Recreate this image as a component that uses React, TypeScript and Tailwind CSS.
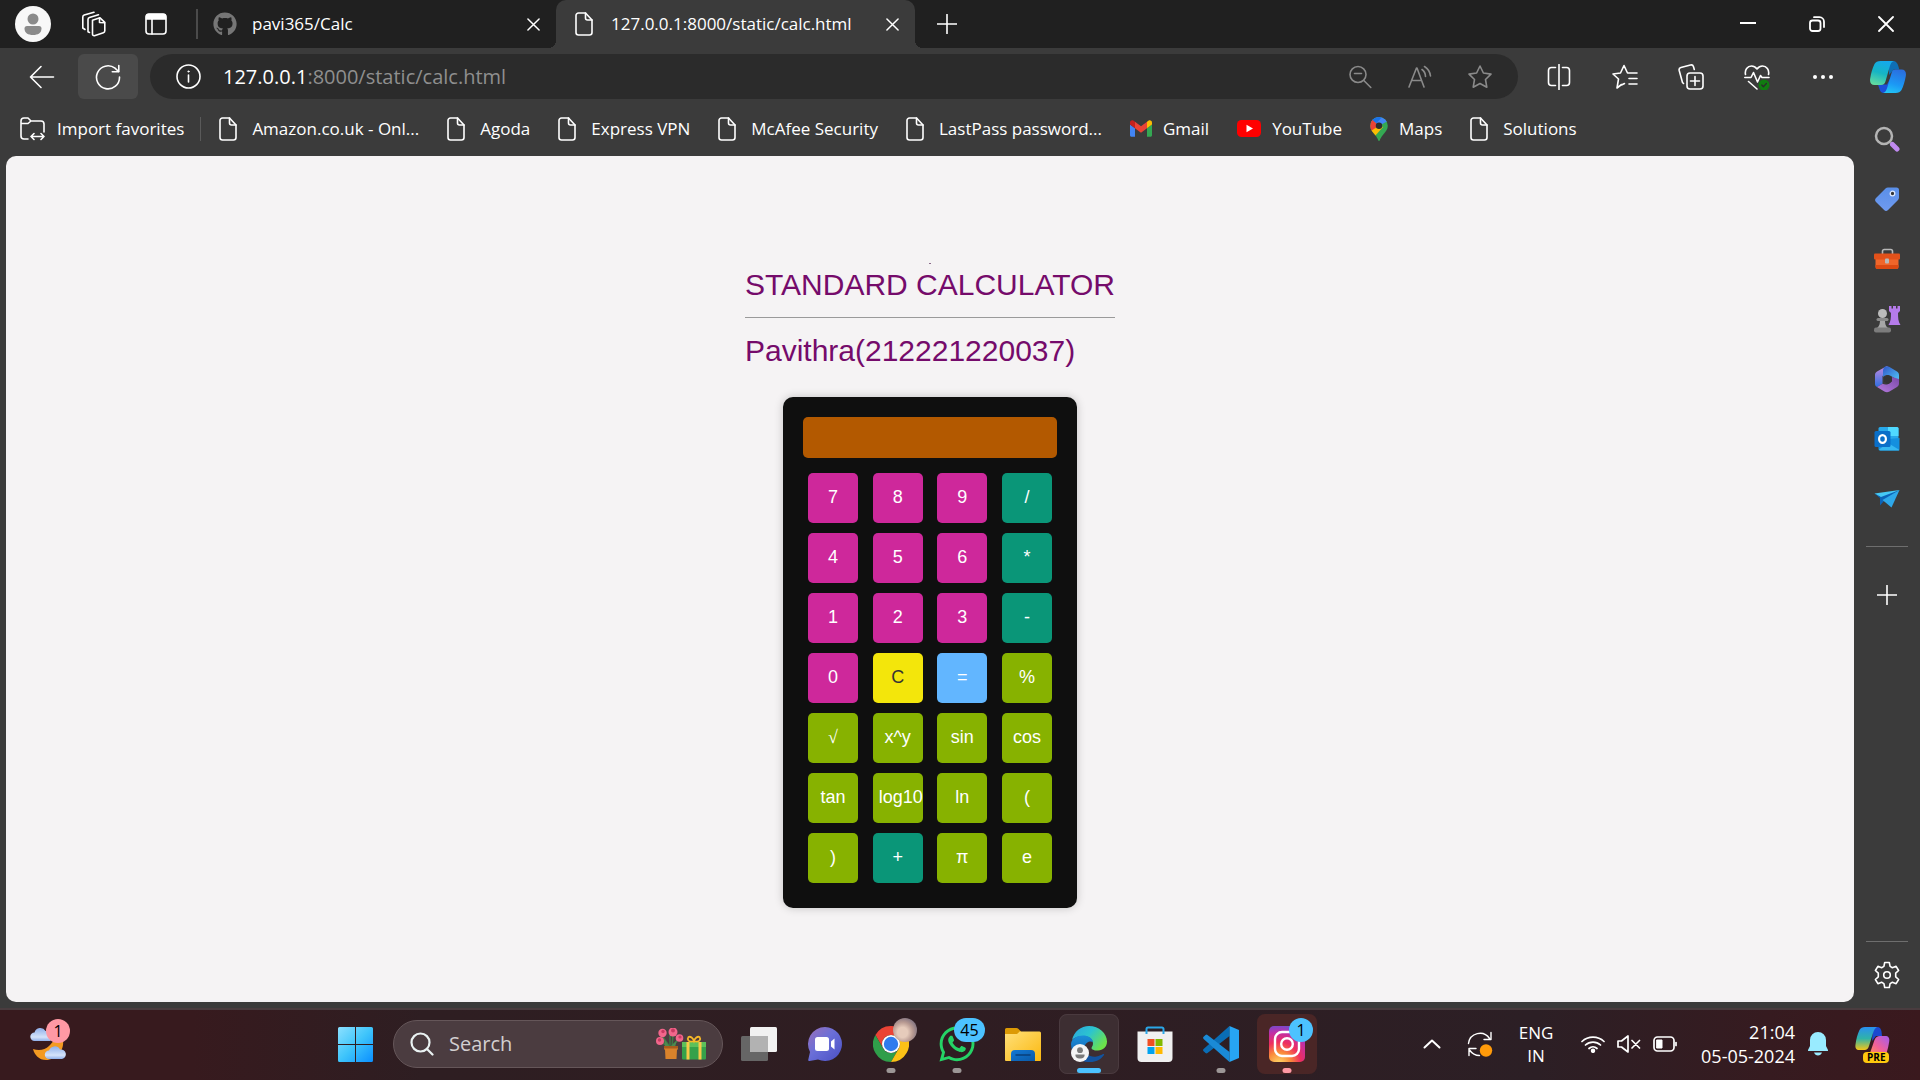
import React, { useState } from "react";
import { FaGithub, FaWhatsapp } from "react-icons/fa";

type IconProps = { className?: string };

const line = {
  fill: "none",
  stroke: "currentColor",
  strokeWidth: 1.6,
  strokeLinecap: "round" as const,
  strokeLinejoin: "round" as const,
};

function PageIcon({ className = "" }: IconProps) {
  return (
    <svg viewBox="0 0 18 24" className={`h-6 w-[18px] shrink-0 ${className}`} {...line}>
      <path d="M3.5 1h7L17 8v12.500a2.500 2.500 0 0 1-2.500 2.500h-11A2.500 2.500 0 0 1 1 20.500v-17A2.500 2.500 0 0 1 3.500 1z" />
      <path d="M10.500 1v5a2 2 0 0 0 2 2H17" />
    </svg>
  );
}

function WorkspacesIcon() {
  return (
    <svg viewBox="0 0 26 26" className="size-[26px]" {...line}>
      <path d="M12.500 9.200 20 6.800l4.800 4.500v8.500a2 2 0 0 1-1.400 1.900l-9 3a1.500 1.500 0 0 1-1.900-1.400z" />
      <path d="M19.500 7v4.500l5 .3" />
      <path d="M9.500 21.500 8 20.800V8.500A2 2 0 0 1 9.400 6.600L18.500 3.800" />
      <path d="M5 18.500 2.800 17V6a2 2 0 0 1 1.400-1.900L14 1.200" />
    </svg>
  );
}

function VerticalTabsIcon() {
  return (
    <svg viewBox="0 0 22 22" className="size-[22px]" {...line}>
      <rect x="1" y="1" width="20" height="20" rx="3" />
      <path d="M1.500 3.500A2 2 0 0 1 3.500 1.500h15a2 2 0 0 1 2 2V6h-19z" fill="currentColor" />
      <path d="M7 6v15" />
    </svg>
  );
}

function CloseIcon() {
  return (
    <svg viewBox="0 0 14 14" className="size-[13px]" {...line}>
      <path d="M1 1l12 12M13 1 1 13" />
    </svg>
  );
}

function PlusIcon() {
  return (
    <svg viewBox="0 0 20 20" className="size-5" {...line}>
      <path d="M10 0.500v19M0.500 10h19" />
    </svg>
  );
}

function CopilotIcon() {
  return (
    <svg viewBox="0 0 36 32" className="h-8 w-9">
      <defs>
        <linearGradient id="cpA" x1="0.600" y1="0" x2="0.300" y2="1">
          <stop offset="0" stopColor="#15a9ec" />
          <stop offset="0.500" stopColor="#16b5c4" />
          <stop offset="1" stopColor="#62dba0" />
        </linearGradient>
        <linearGradient id="cpB" x1="0.600" y1="0" x2="0.300" y2="1">
          <stop offset="0" stopColor="#2a6fe0" />
          <stop offset="0.600" stopColor="#1b98f5" />
          <stop offset="1" stopColor="#22c3f5" />
        </linearGradient>
      </defs>
      <path d="M19 0h4c3 0 4.500 2 5.300 5l1 3.500h-5.500L19 14z" fill="#0f6fb5" />
      <path d="M8 23.500h9l3-6 .5 10.500-2.500 4h-4c-3 0-4-2-4.700-4.500z" fill="#1c4fd8" />
      <path d="M10.500 0H24c-2.500.6-3.600 3-4.400 6l-4 14c-.7 2.600-2 4-4.600 4H4.500C1 24-.5 21.500.2 17.500 1 12 2.500 7 4.500 3 5.700 1 7.500 0 10.500 0z" fill="url(#cpA)" />
      <path d="M25.500 8.500h6c3.500 0 5 2.500 4.300 6.500-1 5.500-2.300 10-4.300 14-1.200 2-3 3-6 3H13c2.500-.6 3.600-3 4.400-6l4-13.500c.700-2.600 1.500-4 4.100-4z" fill="url(#cpB)" />
    </svg>
  );
}

function TitleBar() {
  return (
    <header className="flex h-12 items-center bg-[#202020]">
      <div className="flex items-center">
        <button aria-label="Profile" className="ml-[15px] grid size-9 place-items-center overflow-hidden rounded-full bg-[#f8f8f8]">
          <svg viewBox="0 0 36 36" className="size-9" fill="#8b8b8b">
            <circle cx="18" cy="13" r="5.500" />
            <path d="M9.500 22.500A2.500 2.500 0 0 1 12 20h12a2.500 2.500 0 0 1 2.500 2.500C26.500 27 23 29 18 29s-8.500-2-8.500-6.500z" />
          </svg>
        </button>
        <button aria-label="Workspaces" className="ml-[29px]"><WorkspacesIcon /></button>
        <button aria-label="Tab actions" className="ml-[39px]"><VerticalTabsIcon /></button>
      </div>
      <div className="ml-[29px] h-[30px] w-0.5 bg-[#4b4b4b]" />
      <nav className="flex h-12" aria-label="Tabs">
        <div className="flex w-[358px] items-center pl-[15px] pr-4">
          <FaGithub className="size-6 text-[#767676]" />
          <span className="ml-[15px] flex-1 text-[17px]">pavi365/Calc</span>
          <button aria-label="Close tab"><CloseIcon /></button>
        </div>
        <div className="relative flex w-[359px] items-center rounded-t-[10px] bg-[#3b3b3b] pl-[19px] pr-4">
          <span className="absolute -left-2 bottom-0 size-2 bg-[radial-gradient(circle_at_0_0,transparent_8px,#3b3b3b_8px)]" />
          <span className="absolute -right-2 bottom-0 size-2 bg-[radial-gradient(circle_at_100%_0,transparent_8px,#3b3b3b_8px)]" />
          <PageIcon />
          <span className="ml-[18px] flex-1 text-[17px]">127.0.0.1:8000/static/calc.html</span>
          <button aria-label="Close tab"><CloseIcon /></button>
        </div>
      </nav>
      <button aria-label="New tab" className="ml-[22px]"><PlusIcon /></button>
      <div className="ml-auto flex h-12">
        <button aria-label="Minimize" className="grid w-[69px] place-items-center">
          <svg viewBox="0 0 16 16" className="size-4"><path d="M0 6h16v2H0z" fill="#fff" /></svg>
        </button>
        <button aria-label="Restore" className="grid w-[69px] place-items-center">
          <svg viewBox="0 0 16 16" className="size-4" {...line} strokeWidth={1.8}>
            <rect x="1" y="4.500" width="10.500" height="10.500" rx="2.500" />
            <path d="M5 1.200h5.500a4.500 4.500 0 0 1 4.500 4.500V11" />
          </svg>
        </button>
        <button aria-label="Close window" className="grid w-[69px] place-items-center">
          <svg viewBox="0 0 16 16" className="size-4" {...line} strokeWidth={1.800}><path d="M1 1l14 14M15 1 1 15" /></svg>
        </button>
      </div>
    </header>
  );
}

function ToolButton({ label, children }: { label: string; children: React.ReactNode }) {
  return (
    <button aria-label={label} className="grid h-full w-[66px] shrink-0 place-items-center">
      {children}
    </button>
  );
}

function AddressRow() {
  return (
    <div className="flex h-[57px] items-center bg-[#3b3b3b]">
      <button aria-label="Back" className="ml-[29px]">
        <svg viewBox="0 0 26 24" className="h-6 w-[26px]" {...line}><path d="M24.500 12H1.500M12 1.500 1.500 12 12 22.500" /></svg>
      </button>
      <button aria-label="Refresh" className="ml-[23px] grid h-[45px] w-[60px] place-items-center rounded-md bg-[#4a4a4a]">
        <svg viewBox="0 0 26 26" className="size-[26px]" {...line}>
          <path d="M24.500 13A11.500 11.500 0 1 1 20 4.200L23.500 7.500" />
          <path d="M23.800 1.500v6.300h-6.500" />
        </svg>
      </button>
      <div className="ml-3 flex h-[45px] flex-1 items-center rounded-full bg-[#2b2b2b] pl-[26px] pr-2">
        <svg viewBox="0 0 25 25" className="size-[25px]" {...line}>
          <circle cx="12.500" cy="12.500" r="11.500" />
          <path d="M12.500 11v7" />
          <circle cx="12.500" cy="7.500" r=".8" fill="currentColor" strokeWidth=".5" />
        </svg>
        <span className="ml-[22px] flex-1 text-[20px]">
          127.0.0.1<span className="text-[#8f8f8f]">:8000/static/calc.html</span>
        </span>
        <div className="flex text-[#8a8a8a]">
          <button aria-label="Zoom out" className="grid w-[60px] place-items-center">
            <svg viewBox="0 0 24 24" className="size-6" {...line}><circle cx="10" cy="9.500" r="8" /><path d="M6.500 8.500h7M15.800 15.500l7 7" /></svg>
          </button>
          <button aria-label="Read aloud" className="grid w-[60px] place-items-center">
            <svg viewBox="0 0 24 24" className="size-6" {...line}><path d="M1 22 8.500 3h.5l7 19M4 15.500h9.500M14 4.500a9 9 0 0 1 3.500 7M16.500 1.500A13 13 0 0 1 22.500 11" /></svg>
          </button>
          <button aria-label="Add to favorites" className="grid w-[60px] place-items-center">
            <svg viewBox="0 0 26 26" className="size-[26px]" {...line}><path d="M13 2l3.400 7 7.600 1.100-5.500 5.400 1.300 7.700L13 19.500l-6.800 3.700 1.300-7.700L2 10.100 9.600 9z" /></svg>
          </button>
        </div>
      </div>
      <div className="ml-2 flex h-full">
        <ToolButton label="Split screen">
          <svg viewBox="0 0 26 26" className="size-[26px]" {...line}><path d="M9.500 3.500h-4a3 3 0 0 0-3 3v12a3 3 0 0 0 3 3h4M16.500 3.500h4a3 3 0 0 1 3 3v12a3 3 0 0 1-3 3h-4M13 .5v25" /></svg>
        </ToolButton>
        <ToolButton label="Favorites">
          <svg viewBox="0 0 26 26" className="size-[26px]" {...line}><path d="M9.500 20.500 5 24l1.500-9L1 10l7.500-1L12 1.500 15.500 9H25M17 14.500h8M17 20h8M12.500 19.500 9.500 21" /></svg>
        </ToolButton>
        <ToolButton label="Collections">
          <svg viewBox="0 0 26 26" className="size-[26px]" {...line}>
            <rect x="9" y="9" width="16" height="16" rx="3" />
            <path d="M17 12.500v9M12.500 17h9M5.500 19.500 4.500 18.500 1.200 6.500a2.500 2.500 0 0 1 1.700-3L12.500 1a2.500 2.500 0 0 1 3 1.700L16.300 5.500" />
          </svg>
        </ToolButton>
        <ToolButton label="Browser essentials">
          <svg viewBox="0 0 26 26" className="size-[26px]" {...line}>
            <path d="M1.500 10.500C.5 6 3.500 2 7.500 2c2.500 0 4.200 1.300 5.500 3 1.300-1.700 3-3 5.500-3 4 0 7 4 6 8.500" />
            <path d="M.8 13.500H7l2.500-5 4 9.500 3-6.500 1.500 2h7M4.500 17.500 13 25" />
            <circle cx="20" cy="21" r="5.500" fill="#107c10" stroke="none" />
            <path d="M17.800 21l1.600 1.700 3-3.200" stroke="#2b2b2b" strokeWidth="1.300" />
          </svg>
        </ToolButton>
        <ToolButton label="Settings and more">
          <svg viewBox="0 0 22 6" className="h-1.5 w-[22px]" fill="#fff"><circle cx="3" cy="3" r="2" /><circle cx="11" cy="3" r="2" /><circle cx="19" cy="3" r="2" /></svg>
        </ToolButton>
        <button aria-label="Copilot" className="grid w-16 place-items-center"><CopilotIcon /></button>
      </div>
    </div>
  );
}

function GmailIcon() {
  return (
    <svg viewBox="0 62 512 388" className="h-[17px] w-[22px]">
      <path fill="#4285f4" d="M34.910 448.818h81.454V251L0 163.727V413.910c0 19.287 15.622 34.910 34.910 34.910z" />
      <path fill="#34a853" d="M395.636 448.818h81.455c19.287 0 34.909-15.622 34.909-34.909V163.727L395.636 251z" />
      <path fill="#fbbc04" d="M395.636 99.727V251L512 163.727v-46.545c0-43.142-49.250-67.782-83.782-41.891z" />
      <path fill="#ea4335" d="M116.364 251V99.727L256 204.455 395.636 99.727V251L256 355.727z" />
      <path fill="#c5221f" d="M0 117.182v46.545L116.364 251V99.727L83.782 75.291C49.250 49.400 0 74.040 0 117.182z" />
    </svg>
  );
}

function YouTubeIcon() {
  return (
    <svg viewBox="0 0 24 17" className="h-[17px] w-6"><rect width="24" height="17" rx="4.500" fill="#f00" /><path d="M9.500 4.800v7.400L16 8.500z" fill="#fff" /></svg>
  );
}

function MapsIcon() {
  return (
    <svg viewBox="0 0 18 24" className="h-6 w-[18px]">
      <defs><clipPath id="pin"><path d="M9 0a8.800 8.800 0 0 1 8.800 8.800c0 3.500-2 5.600-4.300 8.400C11 20.200 10.200 22 9.700 23.500c-.3.700-1.100.7-1.400 0-.5-1.500-1.300-3.300-3.800-6.300C2.200 14.400.2 12.300.2 8.800A8.800 8.800 0 0 1 9 0z" /></clipPath></defs>
      <g clipPath="url(#pin)">
        <path d="M0 0h18v24H0z" fill="#34a853" />
        <path d="M-2 6 9 8.800 18 4V-2H0z" fill="#4285f4" />
        <path d="M3-2 13-1 6.500 6 2 4z" fill="#1a73e8" />
        <path d="M-1 2 2.500 3 9 8.800 1 16-1 12z" fill="#ea4335" />
        <path d="M9 8.800 0 14.500 5 19 13 10z" fill="#fbbc04" />
      </g>
      <circle cx="9" cy="8.800" r="3.200" fill="#2d2d2d" />
    </svg>
  );
}

const favorites: { name: string; icon?: React.ReactNode }[] = [
  { name: "Amazon.co.uk - Onl..." },
  { name: "Agoda" },
  { name: "Express VPN" },
  { name: "McAfee Security" },
  { name: "LastPass password..." },
  { name: "Gmail", icon: <GmailIcon /> },
  { name: "YouTube", icon: <YouTubeIcon /> },
  { name: "Maps", icon: <MapsIcon /> },
  { name: "Solutions" },
];

function FavoritesBar() {
  return (
    <nav aria-label="Favorites" className="flex h-[51px] items-center pb-1 pl-3.5 text-[17px]">
      <a href="#import" className="flex items-center gap-3">
        <svg viewBox="0 0 25 24" className="h-6 w-[25px]" {...line}>
          <path d="M8 22H4a3 3 0 0 1-3-3V4a3 3 0 0 1 3-3h4l3 3h10a3 3 0 0 1 3 3v8M1 6.500h7L11 4M11 19.500h13M14 16.500l-3 3 3 3M21 16.500l3 3-3 3" />
        </svg>
        Import favorites
      </a>
      <div className="ml-4 mr-[18px] h-6 w-px bg-[#5a5a5a]" />
      <div className="flex items-center gap-7">
        {favorites.map((f) => (
          <a key={f.name} href="#favorite" className={`flex items-center whitespace-nowrap ${f.icon ? "gap-[11px]" : "gap-[15px]"}`}>
            {f.icon ?? <PageIcon />}
            {f.name}
          </a>
        ))}
      </div>
    </nav>
  );
}

const keyTone = {
  digit: "bg-[#ce289b] text-white",
  op: "bg-[#0a9678] text-white",
  fn: "bg-[#87b200] text-white",
  clear: "bg-[#f3e60b] text-[#333]",
  equal: "bg-[#62b6ff] text-white",
};

type Tone = keyof typeof keyTone;

const keys: [string, Tone][] = [
  ["7", "digit"], ["8", "digit"], ["9", "digit"], ["/", "op"],
  ["4", "digit"], ["5", "digit"], ["6", "digit"], ["*", "op"],
  ["1", "digit"], ["2", "digit"], ["3", "digit"], ["-", "op"],
  ["0", "digit"], ["C", "clear"], ["=", "equal"], ["%", "fn"],
  ["√", "fn"], ["x^y", "fn"], ["sin", "fn"], ["cos", "fn"],
  ["tan", "fn"], ["log10", "fn"], ["ln", "fn"], ["(", "fn"],
  [")", "fn"], ["+", "op"], ["π", "fn"], ["e", "fn"],
];

function Calculator() {
  const [value, setValue] = useState("");
  return (
    <section className="mt-7 w-[294px] rounded-[10px] bg-[#0f0f0f] px-5 pb-[25px] pt-5 shadow-[0_0_10px_rgba(0,0,0,0.2)]">
      <input
        aria-label="Result"
        value={value}
        readOnly
        className="block h-[41px] w-full rounded-[5px] bg-[#b35900] px-2.5 text-right text-lg text-white outline-none"
      />
      <div className="mt-[15px] grid grid-cols-[repeat(4,50px)] justify-between gap-y-2.5 px-[5px]">
        {keys.map(([label, tone]) => (
          <button
            key={label}
            onClick={() => setValue(label === "C" ? "" : value + label)}
            className={`h-[50px] rounded-[5px] px-1.5 pb-0.5 text-left text-lg ${keyTone[tone]}`}
          >
            <span className={label === "√" ? "block text-center font-['Liberation_Serif',serif]" : "block text-center"}>{label}</span>
          </button>
        ))}
      </div>
    </section>
  );
}

function PageContent() {
  return (
    <main className="flex flex-1 flex-col items-center rounded-[10px] bg-[#f5f3f4] pt-[107px] font-['Liberation_Sans',Arial,sans-serif]">
      <hr className="w-0.5 border-t border-[#8a6a8a]" />
      <div className="text-[30px] text-[#750b6b]">
        <h1 className="pt-[3px] leading-9">STANDARD CALCULATOR</h1>
        <hr className="mb-[15px] mt-3.5 border-t border-[#9a9a9a]" />
        <p className="leading-9">Pavithra(212221220037)</p>
      </div>
      <Calculator />
    </main>
  );
}

function SideSearch() {
  return (
    <svg viewBox="0 0 26 26" className="size-[26px]">
      <path d="M15.500 15.500l4 4" stroke="#8a8a8a" strokeWidth="2.500" />
      <circle cx="10" cy="10" r="8" fill="none" stroke="#b4b4b4" strokeWidth="2.500" />
      <path d="M18.500 18.500l4.500 4.500" stroke="#c08af0" strokeWidth="5" strokeLinecap="round" />
    </svg>
  );
}

function SideTag() {
  return (
    <svg viewBox="0 0 26 26" className="size-[26px]">
      <defs><linearGradient id="tag" x1="0" y1="0" x2="0" y2="1"><stop offset="0" stopColor="#5a8fe8" /><stop offset="1" stopColor="#6f9bf0" /></linearGradient></defs>
      <path d="M14 1.500h8.500A2.500 2.500 0 0 1 25 4v7.500c0 1-.3 1.700-1 2.400L14 24c-1.200 1.200-2.700 1.200-3.900 0L2 16c-1.200-1.200-1.200-2.700 0-3.900l9.500-9.600c.7-.7 1.500-1 2.500-1z" fill="url(#tag)" />
      <circle cx="18.500" cy="7.500" r="2.300" fill="#333" stroke="#dce8fc" strokeWidth="1.300" />
    </svg>
  );
}

function SideToolbox() {
  return (
    <svg viewBox="0 0 26 22" className="h-[22px] w-[26px]">
      <path d="M8.500 6V3.200A1.700 1.700 0 0 1 10.200 1.500h6.600a1.700 1.700 0 0 1 1.700 1.700V6" fill="none" stroke="#b8b8b8" strokeWidth="1.600" />
      <path d="M1.500 10h23v9a2 2 0 0 1-2 2h-19a2 2 0 0 1-2-2z" fill="#f0662a" />
      <path d="M1.500 17h23v2a2 2 0 0 1-2 2h-19a2 2 0 0 1-2-2z" fill="#dc4a12" />
      <rect y="5.500" width="26" height="6" rx="1" fill="#e2511a" />
      <rect x="11" y="10.500" width="4" height="5" rx="1" fill="#b9b9b9" />
    </svg>
  );
}

function SideGames() {
  return (
    <svg viewBox="0 0 28 28" className="size-7">
      <path d="M16 1h2.500v2.500H20V1h3v2.500h1.500V1H27v5l-2 2c0 5 .3 9 2.500 12H15.500C17.700 17 18 13 18 8l-2-2z" fill="#b57bea" />
      <circle cx="9.500" cy="8.500" r="4.500" fill="#bcbcbc" />
      <path d="M7 14h5c0 5 .6 7 3 9H4c2.400-2 3-4 3-9z" fill="#a6a6a6" />
      <rect x="3.500" y="13" width="12" height="3" rx="1.500" fill="#8a8a8a" />
      <rect x="1" y="22.500" width="17" height="5" rx="2" fill="#7c7c7c" />
    </svg>
  );
}

function SideM365() {
  return (
    <svg viewBox="0 0 26 28" className="h-7 w-[26px]">
      <defs>
        <linearGradient id="mA" x1="0" y1="0" x2="1" y2="1"><stop offset="0" stopColor="#2f57c9" /><stop offset="1" stopColor="#52c6f7" /></linearGradient>
        <linearGradient id="mB" x1="0" y1="0" x2="0" y2="1"><stop offset="0" stopColor="#c58ae0" /><stop offset="1" stopColor="#2f6fe0" /></linearGradient>
        <linearGradient id="mC" x1="0" y1="1" x2="1" y2="0"><stop offset="0" stopColor="#b77be0" /><stop offset="1" stopColor="#7a4aa8" /></linearGradient>
      </defs>
      <path d="M13 1 3 6.500C1.700 7.300 1 8.500 1 10v9c0 1.500 1 2.500 2 3l5.500-3.200V11L17 6z" fill="url(#mB)" />
      <path d="M10 2.200c2-1.200 3.800-1.200 5.500-.2L23 6.500c1.300.8 2 2 2 3.500v6l-8-5c-2.500-1.500-5.500-1.500-8 1V5z" fill="url(#mA)" />
      <path d="M25 14v4.500c0 1.500-.7 2.700-2 3.500l-7.500 4.500c-1.700 1-3.400 1-5.100 0L3 22l5.500-3.200c3 1.500 6 .7 8-1L18 12z" fill="url(#mC)" />
      <path d="M10 12.500 14 10l4 2.500v4l-4 2.500-4-2.500z" fill="#343434" />
    </svg>
  );
}

function SideOutlook() {
  return (
    <svg viewBox="0 0 26 26" className="size-[26px]">
      <path d="M6 1h17a1.500 1.500 0 0 1 1.500 1.500V15H4.500V2.500A1.500 1.500 0 0 1 6 1z" fill="#28a8ea" />
      <path d="M14 1h9a1.500 1.500 0 0 1 1.500 1.500V10H14z" fill="#50d9ff" />
      <path d="M4.500 14 25.500 12v11a1.500 1.500 0 0 1-1.500 1.500H6A1.500 1.500 0 0 1 4.500 23z" fill="#1490df" />
      <path d="M25.500 24 14 17l-9 6.500c.3.700.8 1 1.500 1H24c.600 0 1.200-.100 1.500-.5z" fill="#35b8f1" />
      <rect x=".5" y="5" width="16" height="16" rx="1.500" fill="#0a6fc9" />
      <ellipse cx="8.500" cy="13" rx="3.400" ry="3.900" fill="none" stroke="#fff" strokeWidth="2.200" />
    </svg>
  );
}

function SidePlane() {
  return (
    <svg viewBox="0 0 26 20" className="h-5 w-[26px]">
      <path d="M.5 4.500 25.500 1 10 10.500z" fill="#45c8f5" />
      <path d="M.5 4.500 6 9v7.500L10 12l15.500-11L7 8z" fill="#0b63b8" />
      <path d="M25.500 1 17.500 18.500 8.500 11z" fill="#2ea8ea" />
    </svg>
  );
}

function Sidebar() {
  const items: [string, React.ReactNode][] = [
    ["Search", <SideSearch />],
    ["Shopping", <SideTag />],
    ["Tools", <SideToolbox />],
    ["Games", <SideGames />],
    ["Microsoft 365", <SideM365 />],
    ["Outlook", <SideOutlook />],
    ["Drop", <SidePlane />],
  ];
  return (
    <aside className="flex w-[66px] shrink-0 flex-col items-center pt-1">
      {items.map(([name, icon]) => (
        <button key={name} aria-label={name} className="grid h-[60px] w-full place-items-center">{icon}</button>
      ))}
      <div className="mt-[17px] h-px w-[42px] bg-[#6e6e6e]" />
      <button aria-label="Customize" className="mt-[38px]"><PlusIcon /></button>
      <div className="mt-auto h-px w-[42px] bg-[#6e6e6e]" />
      <button aria-label="Settings" className="mb-[13px] mt-[19px]">
        <svg viewBox="0 0 28 28" className="size-7" {...line}>
          <path d="M11.700 1.500h4.600l.8 3.900 2.300 1.300 3.700-1.400 2.500 4.200-2.900 2.700v3.600l2.900 2.700-2.500 4.200-3.700-1.400-2.300 1.300-.8 3.900h-4.600l-.8-3.900-2.300-1.300-3.700 1.400-2.500-4.200 2.900-2.700v-3.600L2.400 9.500l2.500-4.200 3.700 1.400 2.300-1.300z" />
          <circle cx="14" cy="14" r="3.300" />
        </svg>
      </button>
    </aside>
  );
}

function WeatherIcon() {
  return (
    <svg viewBox="0 0 36 34" className="h-[34px] w-9">
      <defs>
        <linearGradient id="cloud" x1="0" y1="0" x2="0" y2="1"><stop offset="0" stopColor="#8fb0ea" /><stop offset=".7" stopColor="#d5e3fa" /><stop offset="1" stopColor="#8fb0ea" /></linearGradient>
      </defs>
      <path d="M33 13c1.500 11-7 20-17 20C9 33 4.500 28 3 22c6 2 12 1 16-3 2.500-2.500 4-4.500 6-7z" fill="#f39a22" />
      <path d="M4.500 14a4.200 4.200 0 0 1 0-8.400A6 6 0 0 1 15.500 4 5 5 0 0 1 20 14z" fill="url(#cloud)" />
      <path d="M19 32a4.200 4.200 0 0 1 0-8.400A6 6 0 0 1 30 22.500 4.800 4.800 0 0 1 32 32z" fill="url(#cloud)" />
    </svg>
  );
}

function StartIcon() {
  return (
    <svg viewBox="0 0 35 35" className="size-[35px]">
      <defs><linearGradient id="win" x1="0" y1="0" x2="35" y2="35" gradientUnits="userSpaceOnUse"><stop offset="0" stopColor="#8ce0ff" /><stop offset=".5" stopColor="#3fc5fb" /><stop offset="1" stopColor="#0a8fff" /></linearGradient></defs>
      <path d="M1.500 0H17v17H0V1.500A1.500 1.500 0 0 1 1.500 0zM18 0h15.500A1.500 1.500 0 0 1 35 1.500V17H18zM0 18h17v17H1.500A1.500 1.500 0 0 1 0 33.500zM18 18h17v15.500a1.500 1.500 0 0 1-1.500 1.500H18z" fill="url(#win)" />
    </svg>
  );
}

function GiftIcon() {
  return (
    <svg viewBox="0 0 50 32" className="h-8 w-[50px]">
      <g stroke="#3f7a45" strokeWidth="1.500" fill="none"><path d="M14 19 6 8M14 19V6M15 19 24 10M13 19 5 14M16 19 17 7" /></g>
      <path d="M8 11l6 8 7-7-2 7H9z" fill="#4c8a50" />
      <g fill="#f2668b"><circle cx="6.500" cy="5" r="4.200" /><circle cx="17" cy="4" r="4.500" /><circle cx="4" cy="13" r="4" /><circle cx="23.500" cy="10" r="3.800" /></g>
      <g fill="#c83a62"><circle cx="7" cy="3.500" r="1.700" /><circle cx="17" cy="2.500" r="2" /><circle cx="3.500" cy="12" r="1.700" /><circle cx="24" cy="9" r="1.600" /></g>
      <path d="M8 18h14v3.500h-1L20.500 31h-11L9 21.500H8z" fill="#d9822b" />
      <path d="M8 18h14v2.500H8z" fill="#a95c1c" />
      <rect x="26" y="14" width="24" height="17.500" rx="1" fill="#35a14a" />
      <rect x="26" y="14" width="24" height="5" fill="#5cc05a" />
      <path d="M30.500 14h3v17.500h-3zM42.500 14h3v17.500h-3z" fill="#f7c948" />
      <path d="M38 13c-6 2-7-2-5.500-4 2-1 4.500 1 5.500 4 1-3 3.500-5 5.500-4C45 11 44 15 38 13z" fill="none" stroke="#f7b928" strokeWidth="1.800" />
    </svg>
  );
}

function TaskViewIcon() {
  return (
    <svg viewBox="0 0 36 34" className="h-[34px] w-9">
      <rect y="9" width="27" height="25" rx="1.500" fill="#666" />
      <rect x="9" y="0" width="27" height="25" rx="1.500" fill="#f2f2f2" />
      <path d="M9 9h18v16H10.500A1.500 1.500 0 0 1 9 23.500z" fill="#b2b2b2" />
    </svg>
  );
}

function ChatIcon() {
  return (
    <svg viewBox="0 0 34 34" className="size-[34px]">
      <defs><linearGradient id="chat" x1="0" y1="0" x2="1" y2="1"><stop offset="0" stopColor="#9a6fb8" /><stop offset=".45" stopColor="#6a6fd8" /><stop offset="1" stopColor="#4a4fc4" /></linearGradient></defs>
      <path d="M17 0a17 17 0 1 1-7 32.500L1.500 34C.5 34 0 33.500.3 32.500L2 25A17 17 0 0 1 17 0z" fill="url(#chat)" />
      <rect x="7" y="10" width="14" height="14" rx="2.500" fill="#fff" />
      <path d="M23 14.500 26.500 11.500v11L23 19.500z" fill="#fff" />
    </svg>
  );
}

function ChromeIcon() {
  return (
    <svg viewBox="0 0 36 36" className="size-9">
      <path d="M2.410 9A18 18 0 0 1 33.590 9H18a9 9 0 0 0-7.800 13.500z" fill="#ea4335" />
      <path d="M2.410 9 10.200 22.500A9 9 0 0 0 25.800 22.500L18 36A18 18 0 0 1 2.410 9z" fill="#2f9e4a" />
      <path d="M33.590 9A18 18 0 0 1 18 36l7.800-13.500A9 9 0 0 0 18 9z" fill="#fbc116" />
      <circle cx="18" cy="18" r="9" fill="#fff" />
      <circle cx="18" cy="18" r="7.200" fill="#2f7bee" />
    </svg>
  );
}

function FolderIcon() {
  return (
    <svg viewBox="0 0 36 34" className="h-[34px] w-9">
      <defs>
        <linearGradient id="fold" x1="0" y1="0" x2="1" y2="1"><stop offset="0" stopColor="#ffe07a" /><stop offset="1" stopColor="#fbb80f" /></linearGradient>
        <linearGradient id="foldb" x1="0" y1="0" x2="1" y2="1"><stop offset="0" stopColor="#1378d4" /><stop offset="1" stopColor="#0a5aa8" /></linearGradient>
      </defs>
      <path d="M0 2.500A1.500 1.500 0 0 1 1.500 1h10c.8 0 1.300.300 1.800.8L16 4.500V10H0z" fill="#dc9a05" />
      <path d="M0 7h11c1 0 1.500-.3 2-.8L14.500 4.500h20A1.500 1.500 0 0 1 36 6v27a1 1 0 0 1-1 1H1a1 1 0 0 1-1-1z" fill="url(#fold)" />
      <path d="M6 34V27a4 4 0 0 1 4-4h16a4 4 0 0 1 4 4v7z" fill="url(#foldb)" />
      <path d="M11 28h14" stroke="#0a3f7a" strokeWidth="1.500" strokeLinecap="round" />
    </svg>
  );
}

function EdgeIcon() {
  return (
    <svg viewBox="0 0 36 36" className="size-9">
      <defs>
        <linearGradient id="edA" x1="0" y1="0" x2="1" y2=".6"><stop offset="0" stopColor="#2aa4e0" /><stop offset=".5" stopColor="#2cc4cf" /><stop offset="1" stopColor="#6ce34a" /></linearGradient>
        <linearGradient id="edB" x1="0" y1="0" x2="0" y2="1"><stop offset="0" stopColor="#1a8fd8" /><stop offset="1" stopColor="#1454a8" /></linearGradient>
      </defs>
      <path d="M1 14C3 5.500 10 0 18 0c10 0 18 7.500 18 15.500 0 5.500-4 9-9 9-4 0-6.500-1.200-6.500-2.600 0-1 1.500-1.700 1.500-4.400C22 13 17.500 10 12 10 7 10 3 12 1 14z" fill="url(#edA)" />
      <path d="M0 18C.5 12.500 6 9.500 12 9.500c5 0 9.500 2.500 10 6.500-2-1.500-8-.5-8.500 5.500-.5 6 4.500 10.500 9.500 13-2 1-3.500 1.500-5 1.500C8 36 0 28 0 18z" fill="url(#edB)" />
      <path d="M13.500 21.500c0 7 6 10 12 9 3-.5 5-1.700 6.500-2.500.8-.4 1.400.3 1 1-3 4.500-8 7-14 7-6-1.500-9-8-5.500-14.500z" fill="#12539e" />
      <circle cx="9" cy="27" r="9" fill="#f4f4f4" />
      <circle cx="9" cy="24.200" r="2.900" fill="#7a7a7a" />
      <path d="M4.500 28.500h9c.500 2.500-1.500 4-4.500 4s-5-1.500-4.500-4z" fill="#7a7a7a" />
    </svg>
  );
}

function StoreIcon() {
  return (
    <svg viewBox="0 0 36 36" className="size-9">
      <path d="M.5 5.500h35V32a4 4 0 0 1-4 4h-27a4 4 0 0 1-4-4z" fill="#f0f0f0" />
      <path d="M9.500 8V3A1.500 1.500 0 0 1 11 1.500h14A1.500 1.500 0 0 1 26.500 3v5" fill="none" stroke="#2aa7e8" strokeWidth="2" />
      <path d="M10.500 13h7v7h-7z" fill="#f04f23" /><path d="M18.500 13h7v7h-7z" fill="#80b900" />
      <path d="M10.500 21h7v7h-7z" fill="#00a3f0" /><path d="M18.500 21h7v7h-7z" fill="#ffb800" />
    </svg>
  );
}

function CodeIcon() {
  return (
    <svg viewBox="0 0 36 36" className="size-9">
      <path d="M26.500 0v10L4.500 27a1.500 1.500 0 0 1-2 0L.6 25.300c-.700-.6-.7-1.700 0-2.300z" fill="#0a6db5" />
      <path d="M26.500 36V26L4.500 9a1.500 1.500 0 0 0-2 0L.6 10.700c-.7.600-.7 1.700 0 2.300z" fill="#1a8ad6" />
      <path d="M26.500 0 36 4v28l-9.500 4z" fill="#27a5f2" />
    </svg>
  );
}

function InstagramIcon() {
  return (
    <svg viewBox="0 0 36 36" className="size-9">
      <defs>
        <radialGradient id="ig" cx=".28" cy="1.050" r="1.100"><stop offset="0" stopColor="#ffdc6a" /><stop offset=".3" stopColor="#fa8a3a" /><stop offset=".55" stopColor="#ee2e5f" /><stop offset=".8" stopColor="#c02fa8" /><stop offset="1" stopColor="#6a4fd0" /></radialGradient>
      </defs>
      <rect width="36" height="36" rx="5" fill="url(#ig)" />
      <rect x="6" y="6" width="24" height="24" rx="7" fill="none" stroke="#fff" strokeWidth="2.400" />
      <circle cx="18" cy="18" r="5.800" fill="none" stroke="#fff" strokeWidth="2.400" />
    </svg>
  );
}

type AppState = { name: string; icon: React.ReactNode; tile?: string; dot?: string; badge?: React.ReactNode };

const apps: AppState[] = [
  { name: "Task view", icon: <TaskViewIcon /> },
  { name: "Chat", icon: <ChatIcon /> },
  {
    name: "Chrome",
    icon: <ChromeIcon />,
    dot: "w-[9px] bg-[#9c9696]",
    badge: <span className="absolute right-1 top-[4px] size-6 rounded-full bg-[radial-gradient(circle_at_40%_60%,#e6cbbb_25%,#b89a92_50%,#857682_75%)]" />,
  },
  {
    name: "WhatsApp",
    icon: <FaWhatsapp className="size-10 text-[#25d366]" />,
    dot: "w-[9px] bg-[#9c9696]",
    badge: <span className="absolute right-0.5 top-[4px] grid h-6 w-[31px] place-items-center rounded-full bg-[#4cc2ff] text-[16px] leading-none text-black">45</span>,
  },
  { name: "File Explorer", icon: <FolderIcon /> },
  { name: "Edge", icon: <EdgeIcon />, tile: "bg-[#3d2e32] outline outline-1 -outline-offset-1 outline-[#4a3a3f]", dot: "w-6 bg-[#4cc2ff]" },
  { name: "Microsoft Store", icon: <StoreIcon /> },
  { name: "Visual Studio Code", icon: <CodeIcon />, dot: "w-[9px] bg-[#9c9696]" },
  {
    name: "Instagram",
    icon: <InstagramIcon />,
    tile: "bg-[#4a2626]",
    dot: "w-[9px] bg-[#ff99a4]",
    badge: <span className="absolute right-1 top-[4px] grid size-6 place-items-center rounded-full bg-[#4cc2ff] text-[16px] leading-none text-black">1</span>,
  },
];

function Taskbar() {
  return (
    <footer className="flex h-[72px] items-center border-t-2 border-[#4a3c3f] bg-[linear-gradient(90deg,#371a1e_0%,#371a1e_10%,#2e1e22_22%,#2f1d22_50%,#2c1f25_80%,#361b20_92%,#3a191e_100%)] pb-0.5">
      <button aria-label="Weather" className="relative ml-[30px] w-[42px]">
        <WeatherIcon />
        <span className="absolute right-0.5 -top-2 grid size-6 place-items-center rounded-full bg-[#ff99a4] text-[16px] leading-none text-black">1</span>
      </button>
      <div className="ml-[266px] flex items-center">
        <button aria-label="Start"><StartIcon /></button>
        <label className="ml-5 flex h-12 w-[330px] items-center rounded-full border border-[#655659] bg-[#4b3c40] pl-4 pr-4">
          <svg viewBox="0 0 24 24" className="size-6 shrink-0" fill="none" stroke="#eaf2f2" strokeWidth="2.200" strokeLinecap="round"><circle cx="10.500" cy="10.500" r="9" /><path d="M17 17l5.500 5.500" /></svg>
          <input type="search" aria-label="Search" placeholder="Search" className="ml-[15px] w-full min-w-0 flex-1 bg-transparent text-[20px] outline-none placeholder:text-[#d3cfd0]" />
          <GiftIcon />
        </label>
        <div className="ml-[6px] flex gap-1.5">
          {apps.map((app) => (
            <button key={app.name} aria-label={app.name} className={`relative grid size-[60px] place-items-center rounded-lg ${app.tile ?? ""}`}>
              {app.icon}
              {app.badge}
              {app.dot && <span className={`absolute bottom-px left-1/2 h-[5px] -translate-x-1/2 rounded-full ${app.dot}`} />}
            </button>
          ))}
        </div>
      </div>
      <div className="ml-auto flex items-center">
        <button aria-label="Show hidden icons">
          <svg viewBox="0 0 18 12" className="h-3 w-[18px]" {...line} strokeWidth={2}><path d="M1.500 9.500 9 2.500l7.500 7" /></svg>
        </button>
        <button aria-label="Updates" className="ml-[26px]">
          <svg viewBox="0 0 26 26" className="size-[26px]" {...line} strokeWidth={1.400}>
            <path d="M1.500 12.500A11.500 11.500 0 0 1 22.500 7.500M24 1.500v7h-7M2 24.500v-7h7M2.500 19c2.500 3.500 6 5.500 10 5.500" />
            <circle cx="19" cy="19.500" r="6.200" fill="#ff9a0a" stroke="none" />
          </svg>
        </button>
        <button className="ml-[25px] w-9 text-center text-[17px] leading-[23px]">ENG IN</button>
        <button aria-label="Network, sound and battery" className="ml-[27px] flex items-center gap-3">
          <svg viewBox="0 0 24 18" className="h-[18px] w-6" {...line} strokeWidth={1.700}>
            <path d="M1 6.500a16 16 0 0 1 22 0M4.500 10a11 11 0 0 1 15 0M8 13.500a6 6 0 0 1 8 0" />
            <circle cx="12" cy="15.800" r="1.400" fill="currentColor" />
          </svg>
          <svg viewBox="0 0 24 18" className="h-[18px] w-6" {...line} strokeWidth={1.700}>
            <path d="M1 6h3.500L11 1v16l-6.500-5H1zM15 5.500l7.500 7.500M22.500 5.500 15 13" />
          </svg>
          <svg viewBox="0 0 24 16" className="h-4 w-6" {...line} strokeWidth={1.700}>
            <rect x="1" y="1" width="20" height="14" rx="3.500" />
            <path d="M4 4h5v8H4z" fill="currentColor" strokeWidth="1" />
            <path d="M23 6.500v3" />
          </svg>
        </button>
        <time className="ml-6 text-right text-[18px] leading-6">21:04<br />05-05-2024</time>
        <button aria-label="Notifications" className="ml-[13px]">
          <svg viewBox="0 0 20 24" className="h-6 w-5" fill="#99ebff">
            <path d="M10 0a8 8 0 0 1 8 8v6l2 4c.2.600 0 1-.700 1H.7c-.700 0-.9-.400-.7-1l2-4V8a8 8 0 0 1 8-8zM6 20.500h8c-.7 1.900-2.200 3-4 3s-3.300-1.100-4-3z" />
          </svg>
        </button>
        <button aria-label="Copilot preview" className="relative ml-[27px] mr-[29px]">
          <svg viewBox="0 0 36 34" className="h-[34px] w-9">
            <defs>
              <linearGradient id="pvA" x1="0" y1="0" x2="0" y2="1"><stop offset="0" stopColor="#2a8ff0" /><stop offset=".5" stopColor="#2fb3a8" /><stop offset="1" stopColor="#f5c518" /></linearGradient>
              <linearGradient id="pvB" x1="1" y1="0" x2="0" y2="1"><stop offset="0" stopColor="#a35cf0" /><stop offset=".6" stopColor="#f0609a" /><stop offset="1" stopColor="#ff8a5c" /></linearGradient>
            </defs>
            <path d="M18 0h4c3 0 4 2 4.500 4.500L27 9h-6l-4 5z" fill="#1a49d0" />
            <path d="M10 0h12c-2 1-3 3-4 6l-4 13c-.8 2.500-2 4-4.500 4h-5C1 23 0 21 .5 17.500 1.200 12 2.500 7 4.500 3 5.500 1 7.500 0 10 0z" fill="url(#pvA)" />
            <path d="M25 9h5c3.500 0 4.700 2 4.200 5.500-.6 4-1.500 8-2.700 11.500H15l4.500-13c.900-2.500 3-4 5.500-4z" fill="url(#pvB)" />
          </svg>
          <span className="absolute -bottom-0.5 left-2 rounded bg-[#ffc90e] px-1 text-[10px] font-bold leading-[11px] text-black">PRE</span>
        </button>
      </div>
    </footer>
  );
}

export default function App() {
  return (
    <div className="flex min-h-screen flex-col bg-[#3b3b3b] font-['Open_Sans','Noto_Sans',sans-serif] text-white">
      <TitleBar />
      <AddressRow />
      <div className="flex flex-1 pb-1.5">
        <div className="flex flex-1 flex-col pl-1.5">
          <FavoritesBar />
          <PageContent />
        </div>
        <Sidebar />
      </div>
      <Taskbar />
    </div>
  );
}
